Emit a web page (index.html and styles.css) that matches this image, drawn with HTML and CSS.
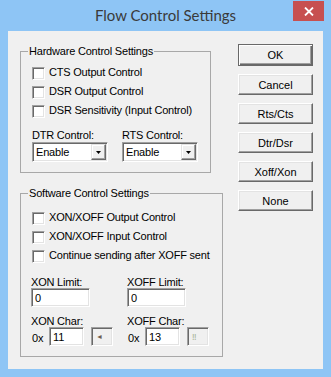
FILE: index.html
```html
<!DOCTYPE html>
<html lang="en">
<head>
  <meta charset="UTF-8">
  <meta name="viewport" content="width=device-width, initial-scale=1.0">
  <title>Flow Control Settings</title>
  <link rel="stylesheet" href="styles.css">
</head>
<body>
  <div class="window">
    <div class="titlebar">
      <div class="title">Flow Control Settings</div>
      <button class="close" type="button" aria-label="Close">
        <svg width="10" height="9" viewBox="0 0 10 9">
          <path d="M1 0.5 L9 8.5 M9 0.5 L1 8.5" stroke="#fff" stroke-width="1.8" fill="none"/>
        </svg>
      </button>
    </div>

    <div class="client">
      <div class="groups">
        <fieldset class="group group-hw">
          <legend>Hardware Control Settings</legend>
          <div class="group-body">
            <label class="check"><input type="checkbox"><span>CTS Output Control</span></label>
            <label class="check"><input type="checkbox"><span>DSR Output Control</span></label>
            <label class="check"><input type="checkbox"><span>DSR Sensitivity (Input Control)</span></label>

            <div class="combos">
              <div class="field">
                <div class="field-label">DTR Control:</div>
                <div class="combo">
                  <span class="combo-text">Enable</span>
                  <span class="drop"><svg width="5" height="3" viewBox="0 0 5 3"><path d="M0 0 H5 L2.5 3 Z" fill="#000"/></svg></span>
                </div>
              </div>
              <div class="field">
                <div class="field-label">RTS Control:</div>
                <div class="combo">
                  <span class="combo-text">Enable</span>
                  <span class="drop"><svg width="5" height="3" viewBox="0 0 5 3"><path d="M0 0 H5 L2.5 3 Z" fill="#000"/></svg></span>
                </div>
              </div>
            </div>
          </div>
        </fieldset>

        <fieldset class="group group-sw">
          <legend>Software Control Settings</legend>
          <div class="group-body">
            <label class="check"><input type="checkbox"><span>XON/XOFF Output Control</span></label>
            <label class="check"><input type="checkbox"><span>XON/XOFF Input Control</span></label>
            <label class="check"><input type="checkbox"><span>Continue sending after XOFF sent</span></label>

            <div class="fields">
              <div class="field">
                <div class="field-label">XON Limit:</div>
                <input class="edit edit-limit" type="text" value="0">
              </div>
              <div class="field">
                <div class="field-label">XOFF Limit:</div>
                <input class="edit edit-limit" type="text" value="0">
              </div>
              <div class="field field-char">
                <div class="field-label">XON Char:</div>
                <div class="char-row">
                  <span class="hex">0x</span>
                  <input class="edit edit-char" type="text" value="11">
                  <span class="glyph glyph-xon">&#9668;</span>
                </div>
              </div>
              <div class="field field-char">
                <div class="field-label">XOFF Char:</div>
                <div class="char-row">
                  <span class="hex">0x</span>
                  <input class="edit edit-char" type="text" value="13">
                  <span class="glyph glyph-xoff">&#8252;</span>
                </div>
              </div>
            </div>
          </div>
        </fieldset>
      </div>

      <div class="buttons">
        <button class="btn btn-default" type="button">OK</button>
        <button class="btn" type="button">Cancel</button>
        <button class="btn" type="button">Rts/Cts</button>
        <button class="btn" type="button">Dtr/Dsr</button>
        <button class="btn" type="button">Xoff/Xon</button>
        <button class="btn" type="button">None</button>
      </div>
    </div>
  </div>
</body>
</html>
```

FILE: styles.css
```css
:root {
  --frame-blue: #8ec5f5;
  --face: #f0f0f0;
  --shadow: #a0a0a0;
  --dark-shadow: #696969;
  --light: #e3e3e3;
  --close-red: #c75050;
}

* {
  box-sizing: border-box;
}

body {
  margin: 0;
  font-family: "Liberation Sans", Arial, sans-serif;
  font-size: 11px;
  letter-spacing: -0.2px;
  color: #000;
}

.window {
  width: 331px;
  height: 377px;
  background-color: var(--frame-blue);
  padding: 0 8px 8px;
  display: flex;
  flex-direction: column;
}

/* title bar */

.titlebar {
  height: 31px;
  margin: 0 -8px;
  display: grid;
  grid-template-columns: 1fr auto 1fr;
}

.title {
  grid-column: 2;
  font-family: Lato, "Open Sans", sans-serif;
  font-size: 15px;
  line-height: 18px;
  letter-spacing: 0;
  padding-top: 6px;
  color: #3a3a3a;
}

.close {
  grid-column: 3;
  justify-self: end;
  align-self: start;
  width: 31px;
  height: 20px;
  margin: 1px 7px 0 0;
  padding: 0;
  border: none;
  background-color: var(--close-red);
  display: flex;
  align-items: center;
  justify-content: center;
}

/* client area */

.client {
  flex: 1;
  background-color: var(--face);
  display: grid;
  grid-template-columns: 203px 75px;
  column-gap: 15px;
  align-items: start;
  padding: 14px 0 0 12px;
}

.group {
  margin: 0;
  padding: 0;
  min-width: 0;
  border: 1px solid #a8a8a8;
}

.group legend {
  margin-left: 7px;
  padding: 0 1px;
  line-height: 13px;
}

.group-hw {
  width: 191px;
}

.group-hw .group-body {
  padding: 6px 0 10px 11px;
}

.group-sw {
  width: 203px;
  margin-top: 14px;
}

.group-sw .group-body {
  padding: 9px 0 10px 11px;
}

.check {
  display: flex;
  height: 19px;
}

.check input {
  appearance: none;
  width: 13px;
  height: 13px;
  margin: 3px 4px 0 0;
  background-color: #fff;
  border: 1px solid;
  border-color: var(--shadow) #fff #fff var(--shadow);
  box-shadow: inset 1px 1px 0 var(--dark-shadow), inset -1px -1px 0 var(--light);
}

.check span {
  line-height: 13px;
  margin-top: 2px;
}

.field-label {
  line-height: 13px;
}

/* combos */

.combos {
  display: grid;
  grid-template-columns: 76px 76px;
  column-gap: 14px;
  margin-top: 8px;
}

.combo {
  height: 20px;
  display: flex;
  background-color: #fff;
  border: 1px solid;
  border-color: var(--shadow) #fff #fff var(--shadow);
  box-shadow: inset 1px 1px 0 var(--dark-shadow), inset -1px -1px 0 var(--light);
  padding: 1px;
}

.combo-text {
  flex: 1;
  padding-left: 2px;
  line-height: 16px;
}

.drop {
  width: 15px;
  background-color: var(--face);
  border: 1px solid;
  border-color: var(--light) var(--dark-shadow) var(--dark-shadow) var(--light);
  box-shadow: inset -1px -1px 0 var(--shadow), inset 1px 1px 0 #fff;
  display: flex;
  align-items: center;
  justify-content: center;
}

/* edits */

.fields {
  display: grid;
  grid-template-columns: 96px 96px;
  margin-left: -1px;
  margin-top: 10px;
}

.fields .field-label {
  line-height: 12px;
}

.field-char {
  margin-top: 8px;
}

.edit {
  height: 19px;
  margin: 0;
  padding: 0 3px;
  font: inherit;
  color: #000;
  background-color: #fff;
  border: 1px solid;
  border-color: var(--shadow) #fff #fff var(--shadow);
  box-shadow: inset 1px 1px 0 var(--dark-shadow), inset -1px -1px 0 var(--light);
  outline: none;
}

.edit-limit {
  width: 59px;
}

.edit-char {
  width: 35px;
}

.char-row {
  display: flex;
  align-items: center;
}

.hex {
  width: 18px;
  padding: 2px 0 0 1px;
}

.glyph {
  width: 22px;
  height: 19px;
  margin-left: 7px;
  padding-left: 4px;
  background-color: var(--face);
  border: 1px solid;
  border-color: var(--shadow) #fff #fff var(--shadow);
  box-shadow: inset 1px 1px 0 var(--dark-shadow), inset -1px -1px 0 var(--light);
  display: flex;
  align-items: center;
  font-size: 7px;
}

.glyph-xon {
  color: #6e5e50;
}

.glyph-xoff {
  font-size: 9px;
  color: #a4b090;
}

/* buttons */

.buttons {
  display: flex;
  flex-direction: column;
  gap: 8px;
  margin-top: -1px;
}

.btn {
  width: 75px;
  height: 21px;
  margin: 0;
  padding: 0;
  font: inherit;
  color: #000;
  background-color: var(--face);
  border: 1px solid;
  border-color: #fff var(--dark-shadow) var(--dark-shadow) #fff;
  box-shadow: inset -1px -1px 0 var(--shadow), inset 1px 1px 0 var(--light);
}

.btn-default {
  height: 22px;
  border-color: var(--dark-shadow);
  box-shadow: inset 1px 1px 0 #fff, inset -1px -1px 0 var(--dark-shadow), inset -2px -2px 0 var(--shadow);
}
```
